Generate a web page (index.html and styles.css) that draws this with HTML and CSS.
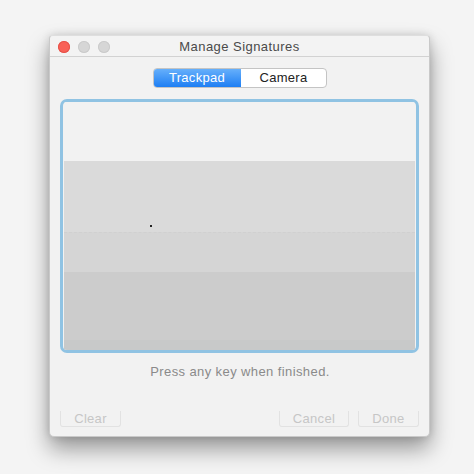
FILE: index.html
```html
<!DOCTYPE html>
<html>
<head>
<meta charset="utf-8">
<link rel="stylesheet" href="styles.css">
</head>
<body>
<div class="window">
  <div class="titlebar">
    <div class="lights">
      <span class="light red"></span>
      <span class="light"></span>
      <span class="light"></span>
    </div>
    <div class="title">Manage Signatures</div>
  </div>
  <div class="content">
    <div class="segmented">
      <div class="seg active">Trackpad</div>
      <div class="seg">Camera</div>
    </div>
    <div class="pad">
      <div class="band b0"></div>
      <div class="band b1"><span class="dot"></span></div>
      <div class="band b2"></div>
      <div class="band b3"></div>
      <div class="band b4"></div>
    </div>
    <div class="hint">Press any key when finished.</div>
    <div class="buttons">
      <div class="btn clear">Clear</div>
      <div class="spacer"></div>
      <div class="btn cancel">Cancel</div>
      <div class="btn done">Done</div>
    </div>
  </div>
</div>
</body>
</html>
```

FILE: styles.css
```css
html, body {
  margin: 0;
  padding: 0;
}
body {
  background: #f4f4f4;
  width: 474px;
  height: 474px;
  overflow: hidden;
  font-family: "Liberation Sans", Arial, sans-serif;
  padding-top: 35px;
  box-sizing: border-box;
  letter-spacing: 0.3px;
}
.window {
  margin-left: 49px;
  width: 381px;
  height: 402px;
  box-sizing: border-box;
  background: #f2f2f2;
  border: 1px solid #c9c9c9;
  border-top-color: #dedede;
  border-radius: 4px 4px 5px 5px;
  box-shadow: 0 12px 22px rgba(0,0,0,0.38), 0 0 8px rgba(0,0,0,0.14);
  display: flex;
  flex-direction: column;
}
.titlebar {
  height: 20px;
  border-bottom: 1px solid #d2d2d2;
  position: relative;
  display: flex;
  align-items: center;
  background: #f3f3f3;
  border-radius: 4px 4px 0 0;
}
.lights {
  display: flex;
  gap: 8px;
  padding-left: 8px;
  margin-top: 2px;
}
.light {
  width: 12px;
  height: 12px;
  border-radius: 50%;
  background: #d6d6d6;
  box-shadow: inset 0 0 0 1px #cbcbcb;
}
.light.red {
  background: #f96157;
  box-shadow: inset 0 0 0 1px #e5534a;
}
.title {
  position: absolute;
  left: 0;
  right: 0;
  top: 3px;
  text-align: center;
  font-size: 13px;
  color: #4a4a4a;
  line-height: 16px;
  letter-spacing: 0.45px;
}
.content {
  flex: 1;
  display: flex;
  flex-direction: column;
  align-items: stretch;
}
.segmented {
  align-self: center;
  margin-top: 11px;
  display: flex;
  width: 174px;
  height: 20px;
  box-sizing: border-box;
  border: 1px solid #c4c4c4;
  border-radius: 4px;
  background: #ffffff;
  overflow: hidden;
  font-size: 13px;
  margin-left: 1px;
}
.seg {
  display: flex;
  align-items: center;
  justify-content: center;
  color: #222;
  line-height: 16px;
}
.seg.active {
  width: 88px;
  margin: -1px 0 -1px -1px;
  background: linear-gradient(#6ab2fb, #1a7cf3);
  color: #fff;
}
.seg:not(.active) {
  flex: 1;
}
.pad {
  margin: 11px 0 0 10px;
  width: 359px;
  height: 254px;
  box-sizing: border-box;
  border: 3px solid #90c3e3;
  border-radius: 7px;
  padding: 0 1px 0 1px;
  display: flex;
  flex-direction: column;
  overflow: hidden;
}
.band {
  flex: none;
  position: relative;
}
.b0 { height: 59px; background: #f2f2f2; }
.b1 { height: 71px; background: #dadada; }
.b2 { height: 40px; background: #d5d5d5; border-top: 1px dashed #d0d0d0; box-sizing: border-box; }
.b3 { height: 68px; background: #cccccc; }
.b4 { flex: 1; background: #c8c9c9; }
.dot {
  position: absolute;
  left: 86px;
  top: 64px;
  width: 2px;
  height: 2px;
  background: #222;
}
.hint {
  margin-top: 11px;
  text-align: center;
  font-size: 13px;
  line-height: 16px;
  color: #8a8a8a;
  padding-left: 1px;
  letter-spacing: 0.4px;
}
.buttons {
  margin-top: 31px;
  display: flex;
  padding: 0 10px;
  gap: 9px;
}
.spacer { flex: 1; }
.btn {
  height: 16px;
  box-sizing: border-box;
  border: 1px solid #e2e2e2;
  border-top: none;
  border-radius: 0 0 3px 3px;
  color: #c6c6c6;
  font-size: 13px;
  line-height: 15px;
  text-align: center;
}
.btn.clear { width: 61px; }
.btn.cancel { width: 70px; }
.btn.done { width: 61px; }
```
